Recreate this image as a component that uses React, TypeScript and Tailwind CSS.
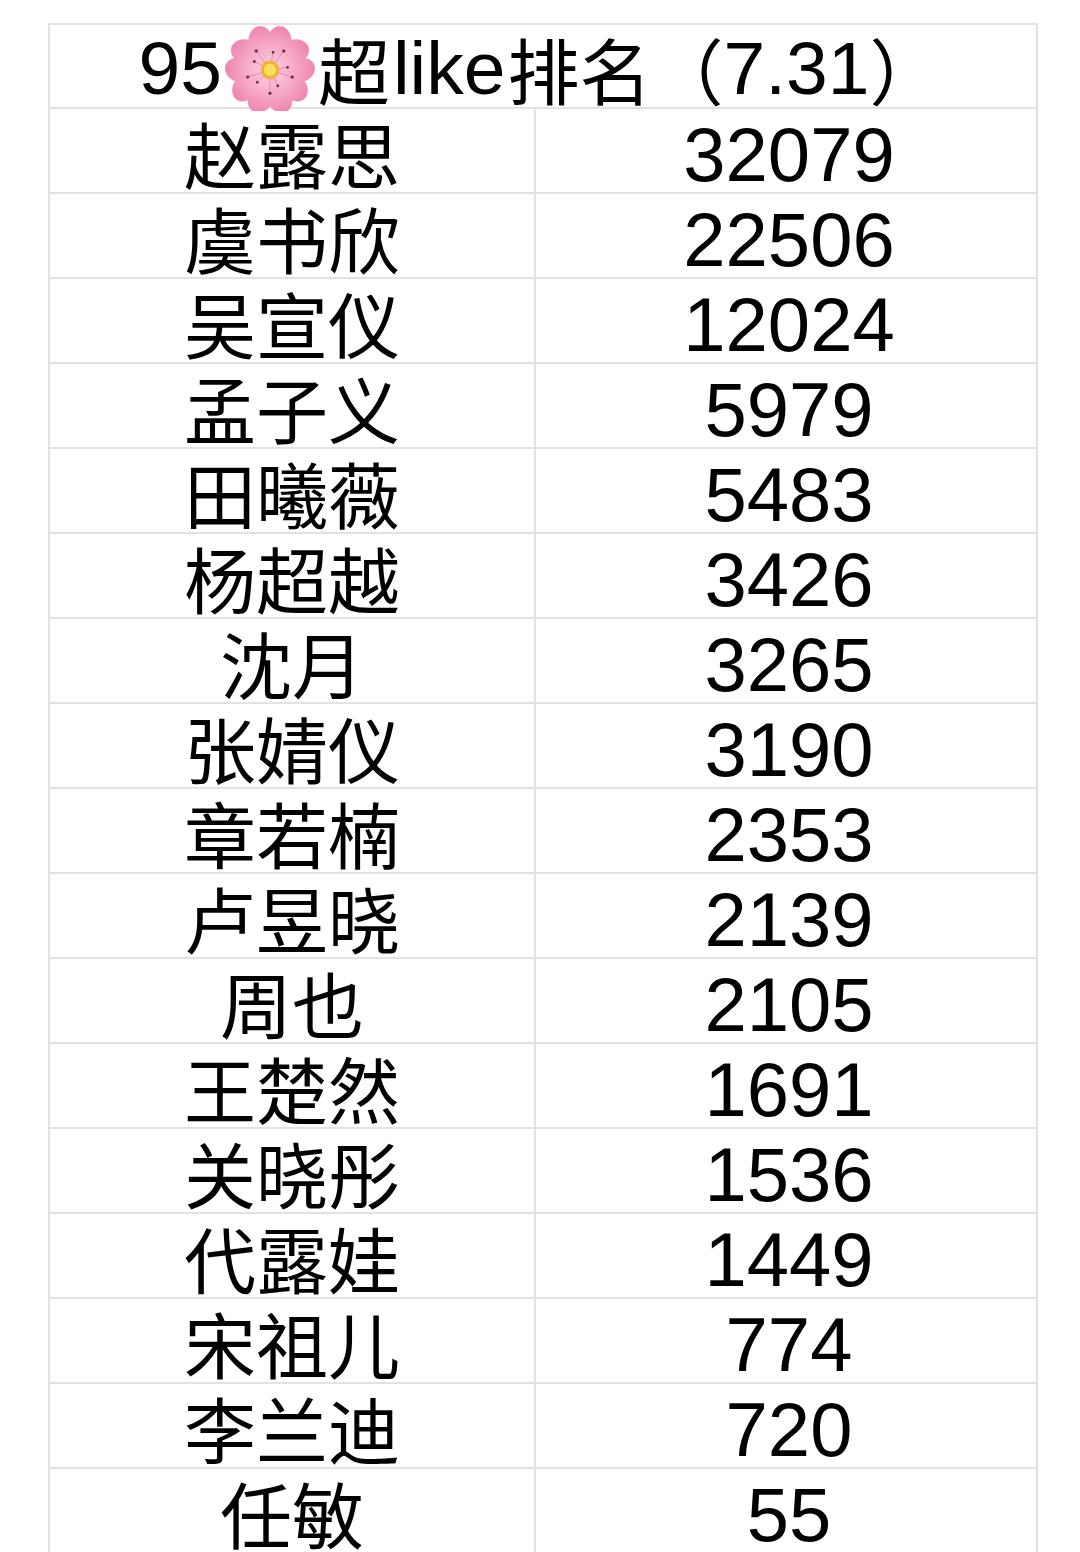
import React from 'react';

const rows: [string, string][] = [
  ['赵露思', '32079'],
  ['虞书欣', '22506'],
  ['吴宣仪', '12024'],
  ['孟子义', '5979'],
  ['田曦薇', '5483'],
  ['杨超越', '3426'],
  ['沈月', '3265'],
  ['张婧仪', '3190'],
  ['章若楠', '2353'],
  ['卢昱晓', '2139'],
  ['周也', '2105'],
  ['王楚然', '1691'],
  ['关晓彤', '1536'],
  ['代露娃', '1449'],
  ['宋祖儿', '774'],
  ['李兰迪', '720'],
  ['任敏', '55'],
];

function Blossom() {
  const petal = 'M0,-3 C-24,-12 -30,-38 -14,-46 C-8,-48 -3,-45 0,-40 C3,-45 8,-48 14,-46 C30,-38 24,-12 0,-3 Z';
  return (
    <svg width="90" height="86" viewBox="-48 -48 96 92" className="mx-[3px] shrink-0">
      <defs>
        <radialGradient id="pg" cx="0" cy="0" r="48" gradientUnits="userSpaceOnUse">
          <stop offset="0" stopColor="#fcd6e6" />
          <stop offset="0.55" stopColor="#f7a9c8" />
          <stop offset="1" stopColor="#ee84b0" />
        </radialGradient>
      </defs>
      {[0, 72, 144, 216, 288].map((a) => (
        <path key={a} d={petal} fill="url(#pg)" stroke="#f3a0c2" strokeWidth="0.6" transform={`rotate(${a})`} />
      ))}
      {[0, 72, 144, 216, 288].map((a) => (
        <g key={'s' + a} transform={`rotate(${a + 36})`}>
          <line x1="0" y1="-6" x2="0" y2="-24" stroke="#d9759f" strokeWidth="0.7" />
          <circle cx="0" cy="-25" r="1.7" fill="#6e2a46" />
        </g>
      ))}
      {[0, 72, 144, 216, 288].map((a) => (
        <g key={'t' + a} transform={`rotate(${a + 10})`}>
          <line x1="0" y1="-6" x2="0" y2="-18" stroke="#d9759f" strokeWidth="0.7" />
          <circle cx="0" cy="-19" r="1.5" fill="#6e2a46" />
        </g>
      ))}
      <circle cx="0" cy="0" r="10" fill="#f0b23a" />
      <circle cx="0" cy="0" r="6.5" fill="#f9dd5c" />
    </svg>
  );
}

export default function App() {
  return (
    <div className="h-[1552px] w-[1080px] overflow-hidden bg-white pl-[48px] pt-[23px]">
      <div className="w-[990px] border-x-2 border-t-2 border-[#e2e2e2] text-black">
        {/* Title */}
        <div className="flex h-[84px] items-center justify-center border-b-2 border-[#e2e2e2] pr-[6px] pt-[4px] text-[72px] leading-none">
          <span className="font-['Liberation_Sans',Arial,sans-serif] text-[75px]">95</span>
          <Blossom />
          <span className="font-['Noto_Sans_CJK_SC',sans-serif]">超</span>
          <span className="ml-[3px] mr-[2px] font-['Liberation_Sans',Arial,sans-serif] text-[75px]">like</span>
          <span className="font-['Noto_Sans_CJK_SC',sans-serif]">排名（</span>
          <span className="font-['Liberation_Sans',Arial,sans-serif] text-[75px]">7.31</span>
          <span className="font-['Noto_Sans_CJK_SC',sans-serif]">）</span>
        </div>

        {rows.map(([name, count]) => (
          <div key={name} className="grid h-[85px] grid-cols-[486px_1fr] border-b-2 border-[#e2e2e2]">
            <div className="flex items-center justify-center border-r-2 border-[#e2e2e2] pt-[2px] font-['Noto_Sans_CJK_SC',sans-serif] text-[72px] leading-none">
              {name}
            </div>
            <div className="flex items-center justify-center pl-[6px] pt-[8px] font-['Liberation_Sans',Arial,sans-serif] text-[76px] leading-none">
              {count}
            </div>
          </div>
        ))}
      </div>
    </div>
  );
}
